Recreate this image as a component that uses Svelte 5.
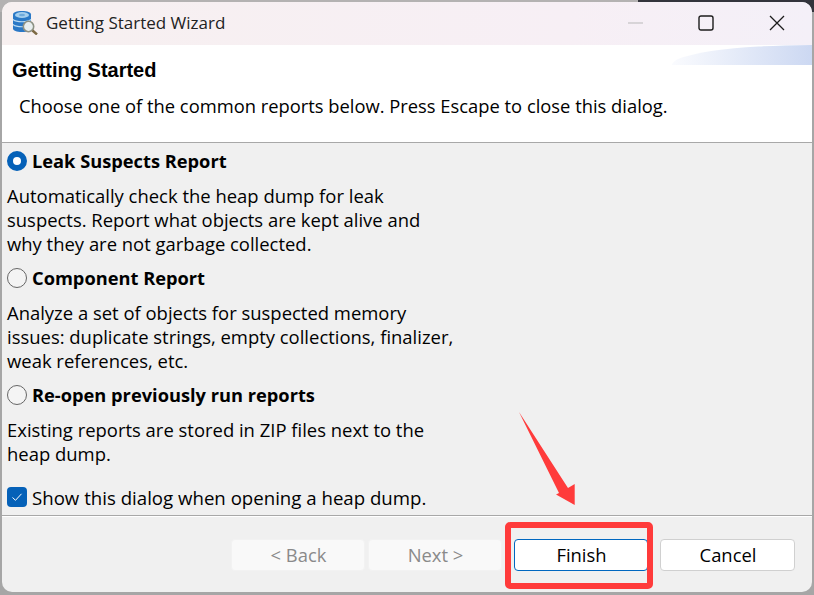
<script>
  const reports = [
    { title: 'Leak Suspects Report', checked: true, lines: ['Automatically check the heap dump for leak', 'suspects. Report what objects are kept alive and', 'why they are not garbage collected.'] },
    { title: 'Component Report', checked: false, lines: ['Analyze a set of objects for suspected memory', 'issues: duplicate strings, empty collections, finalizer,', 'weak references, etc.'] },
    { title: 'Re-open previously run reports', checked: false, lines: ['Existing reports are stored in ZIP files next to the', 'heap dump.'] }
  ];
</script>

<div class="screen">
  <div class="window">
    <div class="titlebar">
      <svg class="appicon" width="25" height="24" viewBox="0 0 25 24">
        <path d="M0 3.500C0 1.500 3.500 0 9 0s9 1.500 9 3.500v14c0 2-3.500 3.500-9 3.500s-9-1.500-9-3.500z" fill="#2a78c6"/>
        <ellipse cx="9" cy="4" rx="7" ry="3" fill="#a6cfee"/>
        <ellipse cx="9" cy="4" rx="3" ry="1.200" fill="#6faadb"/>
        <path d="M0 8.500c3 3 15 3 18 0M0 13.500c3 3 15 3 18 0" stroke="#bcdcf3" stroke-width="1.200" fill="none"/>
        <circle cx="15.500" cy="15.500" r="5.200" fill="#e8eeef" stroke="#8d9184" stroke-width="1.600"/>
        <path d="M19.500 19.500l4.500 4" stroke="#7d6a44" stroke-width="2.400"/>
      </svg>
      <span class="wintitle">Getting Started Wizard</span>
      <div class="controls">
        <svg width="15" height="16" viewBox="0 0 15 16"><path d="M0 8h15" stroke="#b9b9b9"/></svg>
        <svg width="16" height="16" viewBox="0 0 16 16"><rect x="1" y="1" width="14" height="14" rx="2" fill="none" stroke="#1c1c1c" stroke-width="1.400"/></svg>
        <svg width="16" height="16" viewBox="0 0 16 16"><path d="M1 1l14 14M15 1L1 15" stroke="#1c1c1c" stroke-width="1.300"/></svg>
      </div>
    </div>
    <div class="header">
      <h1>Getting Started</h1>
      <p>Choose one of the common reports below. Press Escape to close this dialog.</p>
      <div class="swoosh"></div>
    </div>
    <div class="body">
      {#each reports as r}
        <div class="option">
          <span class="radio" class:on={r.checked}></span>
          <span class="otitle">{r.title}</span>
        </div>
        <div class="desc">
          {#each r.lines as l}<div>{l}</div>{/each}
        </div>
      {/each}
      <div class="show">
        <span class="check">
          <svg width="12" height="12" viewBox="0 0 12 12"><path d="M1.500 6.500l3 2.800L10.500 2.800" fill="none" stroke="#fff" stroke-width="1"/></svg>
        </span>
        <span class="showlabel">Show this dialog when opening a heap dump.</span>
      </div>
    </div>
    <div class="footer">
      <button class="btn disabled">&lt; Back</button>
      <button class="btn disabled next">Next &gt;</button>
      <button class="btn primary">Finish</button>
      <button class="btn cancel">Cancel</button>
    </div>
  </div>
  <div class="redbox"></div>
  <svg class="arrow" width="58" height="96" viewBox="0 0 58 96">
    <path d="M0 1L49 77L55.700 73L55.700 94L37 83.500L40 82z" fill="#ff3b3b"/>
  </svg>
</div>

<style>
  :global(body) { margin: 0; }
  .screen {
    position: relative;
    width: 814px;
    height: 595px;
    overflow: hidden;
    background:
      linear-gradient(90deg, #b4b2b2 638px, #33343c 638px) top / 100% 12px no-repeat,
      #a6a6a6;
    font-family: "Open Sans", "Noto Sans", sans-serif;
    color: #000;
    font-size: 18.35px;
  }
  .window {
    margin: 2px 0 0 2px;
    width: 810px;
    height: 590px;
    border-radius: 10px;
    overflow: hidden;
    background: #f0f0f0;
    display: flex;
    flex-direction: column;
  }
  .titlebar {
    height: 43px;
    box-sizing: border-box;
    flex: none;
    background: linear-gradient(90deg, #f7f0f0, #f7eff5 70%, #f4f0f8);
    display: flex;
    align-items: center;
    padding: 0 0 2px 11px;
  }
  .appicon { flex: none; }
  .wintitle { margin-left: 8px; font-size: 17px; color: #222; }
  .controls {
    margin-left: auto;
    display: flex;
    gap: 55px;
    padding-right: 27px;
    align-items: center;
  }
  .header {
    position: relative;
    height: 98px;
    flex: none;
    background: #fff;
    border-bottom: 1px solid #a8a8a8;
    box-sizing: border-box;
  }
  h1 {
    margin: 0;
    padding: 12px 0 0 10px;
    font-family: "Liberation Sans", Arial, sans-serif;
    font-size: 20px;
    font-weight: 700;
    line-height: 26px;
  }
  p { margin: 0; padding: 10px 0 0 17px; line-height: 26px; }
  .swoosh {
    position: absolute;
    right: 0;
    top: 0;
    width: 140px;
    height: 20px;
    background: linear-gradient(90deg, #fafbfe, #ccd8f2);
    border-top-left-radius: 100% 100%;
  }
  .body { flex: 1; padding: 5px 0 0 5px; }
  .option { display: flex; align-items: center; height: 26px; gap: 5px; }
  .radio {
    width: 20px; height: 20px; box-sizing: border-box;
    border-radius: 50%;
    border: 1.5px solid #666;
    background: #f4f4f4;
  }
  .radio.on { border: 6px solid #0561b8; background: #fff; }
  .otitle { font-weight: 700; font-size: 18.25px; margin-bottom: 2px; }
  .desc { padding: 10px 0 9px 0; line-height: 24px; font-size: 18.45px; }
  .show { display: flex; align-items: center; gap: 5px; height: 26px; margin-top: 9px; }
  .showlabel { font-size: 18.65px; }
  .check {
    width: 20px; height: 20px; border-radius: 4px; background: #0561b8;
    display: flex; align-items: center; justify-content: center;
  }
  .footer {
    height: 77px;
    flex: none;
    box-sizing: border-box;
    border-top: 1px solid #a8a8a8;
    box-shadow: inset 0 1px 0 #fff;
    display: flex;
    padding: 23px 0 0 229px;
    gap: 3px;
  }
  .btn {
    width: 134px; height: 32px; box-sizing: border-box;
    font: inherit; font-size: 18.4px;
    border-radius: 4px; border: 1px solid #d0d0d0;
    background: #fff; color: #000; padding: 0 0 2px 1px;
  }
  .disabled { background: #f9f9f9; border-color: #f2f2f2; color: #8a8a8a; }
  .primary { border-color: #0067c0; margin-left: 9px; }
  .cancel { margin-left: 9px; width: 135px; }
  .redbox {
    position: absolute;
    left: 505px; top: 522px;
    width: 148px; height: 67px;
    box-sizing: border-box;
    border: 6px solid #ff3b3b;
    border-radius: 5px;
  }
  .arrow { position: absolute; left: 519px; top: 411px; }
</style>
